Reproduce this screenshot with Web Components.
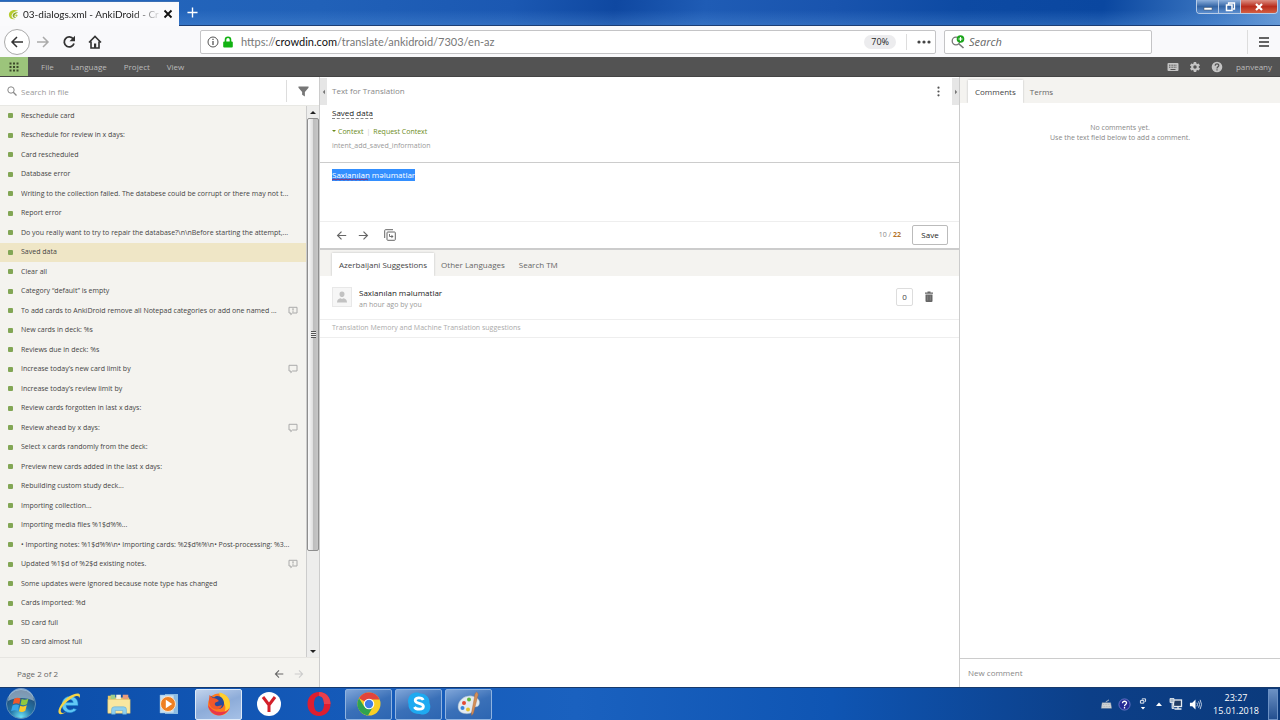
<!DOCTYPE html>
<html lang="en">
<head>
<meta charset="utf-8">
<title>03-dialogs.xml - AnkiDroid - Crowdin</title>
<style>
    html, body {
        height: 100%;
        margin: 0;
    }

    body {
        display: flex;
        flex-direction: column;
        overflow: hidden;
        font-family: "Open Sans", "Noto Sans", sans-serif;
        font-size: 8px;
        line-height: 10px;
        color: #444;
        background: #fff;
    }

    main {
        flex: 1;
        min-height: 0;
        display: grid;
        grid-template-columns: minmax(0, 1fr) minmax(0, 2fr) minmax(0, 1fr);
    }
</style>
</head>
<body>
    <title-bar></title-bar>
    <nav-bar></nav-bar>
    <menu-bar></menu-bar>
    <main>
        <file-panel></file-panel>
        <editor-panel></editor-panel>
        <comments-panel></comments-panel>
    </main>
    <task-bar></task-bar>

<script>
const ICONS = {
    crowdin: ['0 0 12 12', '<path d="M11 2C6.500-.2 1 2 1 6.500 1 10 4.500 12 8 11 5 10.500 3.500 8.500 4 6.500 4.800 3.500 8 2.500 11 2z" fill="#b6cc2e"/><path d="M11 3.500C7.500 3 4.800 4.800 5 7.300 5.300 9.500 7.500 10.200 9 9.500 7 9 6.500 7.500 7.500 6.200 8.200 5.200 9.700 4.500 11 3.500z" fill="#8fa82c"/><circle cx="9.200" cy="7.200" r="1.200" fill="#b6cc2e"/>'],
    close: ['0 0 10 10', '<path d="M1.500 1.500l7 7M8.500 1.500l-7 7" stroke="#111" stroke-width="1.800"/>'],
    plus: ['0 0 12 12', '<path d="M6 .5v11M.5 6h11" stroke="#fff" stroke-width="1.500"/>'],
    back: ['0 0 14 14', '<path d="M13 7H2M7 2L2 7l5 5" fill="none" stroke="currentColor" stroke-width="1.500"/>'],
    forward: ['0 0 14 14', '<path d="M1 7h11M7 2l5 5-5 5" fill="none" stroke="currentColor" stroke-width="1.500"/>'],
    reload: ['0 0 14 14', '<path d="M11.300 4A5 5 0 1 0 12 8.500" fill="none" stroke="currentColor" stroke-width="1.800"/><path d="M13 .8v5.500H7.500z" fill="currentColor"/>'],
    home: ['0 0 14 14', '<path d="M1 7.500L7 1.500l6 6M3 6.500V13h8V6.500" fill="none" stroke="currentColor" stroke-width="1.600"/><path d="M6 8.500h2.200V13H6z" fill="currentColor"/>'],
    info: ['0 0 12 12', '<circle cx="6" cy="6" r="5" fill="none" stroke="#555"/><path d="M6 5v4M6 2.800v1.300" stroke="#555" stroke-width="1.300"/>'],
    lock: ['0 0 12 12', '<path d="M3.500 6V3.800a2.500 2.500 0 0 1 5 0V6" fill="none" stroke="#12b212" stroke-width="1.600"/><rect x="1.200" y="5.500" width="9.600" height="6" rx="1" fill="#12b212"/>'],
    dots: ['0 0 14 4', '<g fill="#444"><circle cx="2" cy="2" r="1.600"/><circle cx="7" cy="2" r="1.600"/><circle cx="12" cy="2" r="1.600"/></g>'],
    engine: ['0 0 14 14', '<circle cx="5" cy="6" r="3.800" fill="none" stroke="#777" stroke-width="1.300"/><path d="M8 9l4.500 4" stroke="#777" stroke-width="1.600"/><circle cx="9.500" cy="4" r="3.800" fill="#1ba51b"/><path d="M9.500 2v4M7.500 4h4" stroke="#fff" stroke-width="1.200"/>'],
    burger: ['0 0 12 12', '<path d="M1 2h10M1 6h10M1 10h10" stroke="#333" stroke-width="1.500"/>'],
    grid: ['0 0 10 10', '<path d="M.5.500h2v2h-2zM4 .5h2v2H4zM7.500.500h2v2h-2zM.5 4h2v2h-2zM4 4h2v2H4zM7.500 4h2v2h-2zM.5 7.500h2v2h-2zM4 7.500h2v2H4zM7.500 7.500h2v2h-2z" fill="#3c4a2a"/>'],
    keyboard: ['0 0 12 12', '<rect x=".5" y="2" width="11" height="8" rx="1" fill="#c4c4c4"/><path d="M2 4.200h8M2 6.200h8" stroke="#555" stroke-dasharray="1 .6"/><path d="M3.500 8.500h5" stroke="#555"/>'],
    gear: ['0 0 24 24', '<path fill="#c4c4c4" d="M19.400 13a7.500 7.500 0 0 0 0-2l2.100-1.600a.5.500 0 0 0 .1-.7l-2-3.400a.5.500 0 0 0-.6-.2l-2.500 1a7.300 7.300 0 0 0-1.700-1l-.4-2.600a.5.500 0 0 0-.5-.5h-4a.5.500 0 0 0-.5.500L9 5.100a7.700 7.700 0 0 0-1.700 1l-2.500-1a.5.500 0 0 0-.6.200l-2 3.400a.5.500 0 0 0 .1.700L4.500 11a7.500 7.500 0 0 0 0 2l-2.100 1.600a.5.500 0 0 0-.1.700l2 3.400c.1.200.4.300.6.200l2.500-1a7.300 7.300 0 0 0 1.700 1l.4 2.600c0 .3.200.5.500.5h4c.3 0 .5-.2.500-.5l.4-2.600a7.700 7.700 0 0 0 1.700-1l2.500 1c.2.100.5 0 .6-.2l2-3.400a.5.500 0 0 0-.1-.7zM12 15.500a3.500 3.500 0 1 1 0-7 3.500 3.500 0 0 1 0 7z"/>'],
    help: ['0 0 12 12', '<circle cx="6" cy="6" r="5.300" fill="#c4c4c4"/><path d="M4.200 4.800C4.200 2 7.900 2.300 7.800 4.600 7.700 5.800 6 5.800 6 7.500" fill="none" stroke="#555" stroke-width="1.200"/><path d="M5.400 8.300h1.200v1.200H5.400z" fill="#555"/>'],
    search: ['0 0 10 10', '<circle cx="4" cy="4" r="3.200" fill="none" stroke="#888"/><path d="M6.300 6.300L9.500 9.500" stroke="#888" stroke-width="1.300"/>'],
    filter: ['0 0 12 12', '<path d="M.5.500h11v1.500L7.500 6.500v5L4.500 9.500v-3L.5 2z" fill="#777"/>'],
    comment: ['0 0 10 9', '<path d="M1 .8h8v5.700H4.500L2.800 8.200V6.500H1z" fill="none" stroke="#aaa"/>'],
    alert: ['0 0 10 9', '<path d="M1 .8h8v5.700H4.500L2.800 8.200V6.500H1z" fill="none" stroke="#aaa"/><path d="M5 1.800v2.200M5 4.800v1" stroke="#999"/>'],
    more: ['0 0 4 10', '<g fill="#555"><circle cx="2" cy="1.500" r="1"/><circle cx="2" cy="5" r="1"/><circle cx="2" cy="8.500" r="1"/></g>'],
    left: ['0 0 6 6', '<path d="M4 .8v4.400L1.800 3z" fill="#777"/>'],
    right: ['0 0 6 6', '<path d="M2 .8v4.400L4.200 3z" fill="#777"/>'],
    copy: ['0 0 12 12', '<path d="M9 .7H1.500a.8.800 0 0 0-.8.800V9M3.800 3h6.700a.8.800 0 0 1 .8.800v6.700a.8.800 0 0 1-.8.800H3.800a.8.800 0 0 1-.8-.8V3.800a.8.800 0 0 1 .8-.8z" fill="none" stroke="#666"/><path d="M5.500 5v2.500h2.800" fill="none" stroke="#666" stroke-width=".9"/><path d="M7.500 5.800l2 1.700-2 1.700z" fill="#666"/>'],
    trash: ['0 0 10 12', '<path d="M1 2.200h8M3.500 1.200h3" stroke="#666" stroke-width="1.200"/><path d="M1.500 3.500h7V10a1 1 0 0 1-1 1h-5a1 1 0 0 1-1-1z" fill="#666"/><path d="M3.700 4.500v5M6.300 4.500v5" stroke="#999" stroke-width=".6"/>'],
    user: ['0 0 18 18', '<path d="M9 3.500a2.600 2.600 0 0 1 2.500 2.700C11.500 7.800 10.400 9.100 9 9.100S6.500 7.800 6.500 6.200A2.600 2.600 0 0 1 9 3.500zM4 14.500c0-2.800 1.500-4 3.500-4.300L9 11l1.500-.8C12.500 10.500 14 11.700 14 14.500z" fill="#c2c2c2"/>'],
    minimize: ['0 0 12 12', '<rect x="2" y="6.500" width="8" height="2.500" fill="#fff" stroke="#456" stroke-width=".5"/>'],
    restore: ['0 0 12 12', '<path d="M4.500 4V2h6v6H9" fill="none" stroke="#fff" stroke-width="1.300"/><rect x="2.500" y="4" width="5.500" height="5.500" fill="none" stroke="#fff" stroke-width="1.500"/>'],
    quit: ['0 0 12 12', '<path d="M3 3l6 6M9 3L3 9" stroke="#fff" stroke-width="2.200"/>'],
    start: ['0 0 32 32', '<defs><radialGradient id="o" cx=".5" cy=".95" r=".95"><stop offset="0" stop-color="#6fe3f5"/><stop offset=".4" stop-color="#2375a8"/><stop offset="1" stop-color="#243f66"/></radialGradient></defs><circle cx="16" cy="16" r="14.500" fill="url(#o)" stroke="#5d8fb8"/><path d="M3 13a13 13 0 0 1 26 0c-7-4-19-4-26 0z" fill="#c9dbe8" opacity=".55"/><path d="M9 11c2.500-1.500 4.500-1.500 6.500-.5L14.300 16c-2-1-4-1-6.500.3z" fill="#f0582b"/><path d="M16.700 11c2.300 1 4.500.8 6.800-.6L22 16c-2.300 1.500-4.500 1.500-6.500.4z" fill="#8fc93f"/><path d="M7.500 17.500c2.500-1.300 4.500-1.200 6.500-.2L12.800 23c-2-1-4-1-6.700.2z" fill="#38a7ea"/><path d="M15.200 17.700c2.200 1 4.300 1 6.600-.4l-1.500 5.500c-2.300 1.500-4.300 1.500-6.400.5z" fill="#fbc92a"/>'],
    explorer: ['0 0 26 26', '<path d="M20.500 18.500C16 24 6.500 22 6 14.500 5.500 7 12 4.500 16 5.500c4.500 1 6.300 4.500 6 9H10c.5 5 5.500 5.500 7.500 3zM10.200 11.500h7c-.5-4-6-4-7 0z" fill="#62c8f5" stroke="#1b86cc" stroke-width=".5"/><path d="M3 22.500C.5 19 7 9 14 5c5-3 10-3.500 10-.5 0 1-.4 2-.8 2.700.3-2.500-2.700-3-7.200-.2C9 11 3.500 18 5 21c.7 1.400 3 1 5 0-2.500 2-5.800 3-7 1.500z" fill="#f5d547"/>'],
    folder: ['0 0 28 26', '<path d="M2 4h7l1 2h15v16H2z" fill="#e8c766"/><path d="M5 3h5v5H5z" fill="#9fcf8c"/><path d="M11 3h5v5h-5z" fill="#f8f3e2"/><path d="M18 3h6v5h-6z" fill="#e99c7c"/><path d="M2 8h24v15H2z" fill="#f9e7a0" stroke="#d7b65a" stroke-width=".5"/><path d="M6 24v-5q0-3 3-3h10q3 0 3 3v5h-4v-4h-8v4z" fill="#8fd0ee" stroke="#62a8d2" stroke-width=".6"/>'],
    media: ['0 0 26 26', '<path d="M9 3h13v20H9z" fill="#8dbde3"/><path d="M4 4h14v18H4z" fill="#c4e0f4" stroke="#86b3d8" stroke-width=".5"/><circle cx="12" cy="13" r="7.500" fill="#ef8022" stroke="#fbe3c8"/><path d="M9.800 8.800l6.400 4.200-6.400 4.200z" fill="#fff"/>'],
    firefox: ['0 0 26 26', '<circle cx="13" cy="13.500" r="11" fill="#ff7a1f"/><path d="M13 1.500c7 1 11.500 6 11 12.500 0 5-3 9-8 10.500 4-4 4.500-9 1.500-13-2-3-4-6-4.500-10z" fill="#ffce2e"/><path d="M4 8l1-3 3 1.500c4-3.500 9.500 0 10 5 .5 5-4 7.500-7.500 6C6 17 6 12 8 11l4-1-3-2z" fill="#2a4a9c"/><path d="M3 9l.5-5 3.500 3c2 0 4.500 1 6 3l-3.500 1.500C8 13 9 15 11 15.200c2.500 0 3-1.200 5-1-1 4-5.500 5-8 3.800C4 16.500 2.500 12 3 9z" fill="#f0582b"/><path d="M2 14c1 7 7 10.500 12 10.300 5-.3 8.500-3.800 9.500-7.300-2.500 3-5 4-9 4-6 0-9.500-3-12.500-7z" fill="#e8374a"/>'],
    yandex: ['0 0 26 26', '<circle cx="13" cy="13" r="12" fill="#fff"/><path d="M7 6l6 8 6-8M13 13v8" fill="none" stroke="#d3202a" stroke-width="3"/>'],
    opera: ['0 0 26 26', '<path fill-rule="evenodd" d="M13 1c7 0 11.500 5.200 11.500 12S20 25 13 25 1.500 19.800 1.500 13 6 1 13 1zm0 4c-3.300 0-5 3.600-5 8s1.700 8 5 8 5-3.600 5-8-1.700-8-5-8z" fill="#de1e30"/><path d="M13 1c7 0 11.500 5.200 11.500 12H18c0-4.400-1.700-8-5-8z" fill="#e8404d"/>'],
    chrome: ['0 0 26 26', '<circle cx="13" cy="13" r="11.500" fill="#f9cf26"/><path d="M13 13L3 7.200A11.500 11.500 0 0 1 23.500 8.500H13z" fill="#e2453c"/><path d="M3 7.200A11.500 11.500 0 0 0 12 24.500l5-8.800L13 13 8.200 15.500z" fill="#2fa34f"/><circle cx="13" cy="13" r="5.300" fill="#fff"/><circle cx="13" cy="13" r="4.200" fill="#3f7de8"/>'],
    skype: ['0 0 26 26', '<path d="M8 2c3-1 5 0 6.500.500C20 2.500 24 7 23.500 12c2 4 .5 11-6 11.500-2 .3-3-.5-4.500-.5-6 0-11-4-10.500-10C1 8 3.500 3 8 2z" fill="#1eaaf1"/><path d="M17.200 9c-1-2.500-8-3-8 .2 0 4 8.200 2.200 8.200 6.300 0 3.500-7.500 3.300-9 .5" fill="none" stroke="#fff" stroke-width="2.800"/>'],
    paint: ['0 0 26 26', '<path d="M2 16C2 9 9 4 16 5c6 1 9 5 7 9-1.500 3-5 1-6 3-1 3 0 5-4 5.500C7 23.500 2 21 2 16z" fill="#e2ebf2" stroke="#90a9bd" stroke-width=".5"/><circle cx="8" cy="12" r="2" fill="#e34b33"/><circle cx="13" cy="8.500" r="2" fill="#62b83b"/><circle cx="6.500" cy="17" r="2" fill="#3b86d9"/><circle cx="12" cy="18.500" r="2" fill="#e6c22d"/><path d="M20.500 1c2 1 2 3 1 5l-4 16-1.800 2.500L15.500 22l3-16c0-2 .5-4 2-5z" fill="#d38f58" stroke="#a7633a" stroke-width=".4"/>'],
    traykeys: ['0 0 14 12', '<path d="M2.500 4.500h10L13.500 11h-12z" fill="#d3d6d8" stroke="#8b98a5" stroke-width=".5"/><path d="M3.500 6.500h8.500M3 8.800h9" stroke="#9aa3aa" stroke-width=".7" stroke-dasharray="1.200 .7"/><path d="M7 4c0-2 2-.8 3.500-3" fill="none" stroke="#c5cbd0"/>'],
    trayhelp: ['0 0 14 14', '<circle cx="7" cy="7" r="6" fill="#252a96" stroke="#8088d8" stroke-width=".8"/><path d="M4.800 5.600c0-3 4.600-2.600 4.400-.2C9.100 7 7 7 7 8.800M7 9.800v1.500" fill="none" stroke="#fff" stroke-width="1.400"/>'],
    trayrestore: ['0 0 8 14', '<path d="M3 2V1h4v3H6M1 3h4v3H1z" fill="none" stroke="#fff"/><path d="M1.500 10.500h5l-2.500 3z" fill="#fff"/>'],
    trayup: ['0 0 8 8', '<path d="M1 6h6L4 2.500z" fill="#fff"/>'],
    network: ['0 0 14 14', '<rect x="4.500" y="3" width="8" height="6.500" fill="#233e66" stroke="#e8edf2" stroke-width="1.300"/><path d="M5.500 12h7M9 9.500V12" stroke="#e8edf2" stroke-width="1.300"/><path d="M1 1.500h4v4H1zM3 5v6.500h2.500" fill="#a8b8c8" stroke="#e8edf2" stroke-width=".8"/>'],
    sound: ['0 0 14 14', '<path d="M1 5h2.500L7 1.500v11L3.500 9H1z" fill="#fff"/><path d="M8.500 5q1.200 2 0 4M10.300 3.500q2.200 3.500 0 7M12 2q3 5 0 10" fill="none" stroke="#dfe8f5" stroke-width=".9"/>']
};

const FILE_STRINGS = [
    ['Reschedule card'],
    ['Reschedule for review in x days:'],
    ['Card rescheduled'],
    ['Database error'],
    ['Writing to the collection failed. The databese could be corrupt or there may not t...'],
    ['Report error'],
    ['Do you really want to try to repair the database?\\n\\nBefore starting the attempt,...'],
    ['Saved data', '', true],
    ['Clear all'],
    ['Category “default” is empty'],
    ['To add cards to AnkiDroid remove all Notepad categories or add one named ...', 'alert'],
    ['New cards in deck: %s'],
    ['Reviews due in deck: %s'],
    ['Increase today’s new card limit by', 'comment'],
    ['Increase today’s review limit by'],
    ['Review cards forgotten in last x days:'],
    ['Review ahead by x days:', 'comment'],
    ['Select x cards randomly from the deck:'],
    ['Preview new cards added in the last x days:'],
    ['Rebuilding custom study deck...'],
    ['Importing collection...'],
    ['Importing media files %1$d%%...'],
    ['• Importing notes: %1$d%%\\n• Importing cards: %2$d%%\\n• Post-processing: %3...'],
    ['Updated %1$d of %2$d existing notes.', 'alert'],
    ['Some updates were ignored because note type has changed'],
    ['Cards imported: %d'],
    ['SD card full'],
    ['SD card almost full']
];

const BASE_STYLE = `
    :host, * { box-sizing: border-box; }
    button, input, textarea {
        margin: 0;
        padding: 0;
        border: 0;
        background: none;
        font: inherit;
        color: inherit;
        outline: none;
    }
    button { display: flex; align-items: center; justify-content: center; }
    a { color: inherit; text-decoration: none; }
`;

class BaseElement extends HTMLElement {
    constructor() {
        super();
        this.attachShadow({ mode: 'open' });
    }

    connectedCallback() {
        this.shadowRoot.innerHTML = `<style>${BASE_STYLE}${this.styles()}</style>${this.render()}`;
        this.ready();
    }

    styles() { return ''; }
    render() { return ''; }
    ready() {}
}

// <ui-icon name="gear" size="12">
class UiIcon extends BaseElement {
    styles() {
        const size = this.getAttribute('size') || '12';
        return `
            :host { display: inline-flex; flex: none; width: ${size}px; height: ${size}px; }
            svg { width: 100%; height: 100%; }
        `;
    }

    render() {
        const [viewBox, body] = ICONS[this.getAttribute('name')];
        return `<svg viewBox="${viewBox}" aria-hidden="true">${body}</svg>`;
    }
}

class TitleBar extends BaseElement {
    styles() {
        return `
            :host {
                display: flex;
                height: 26px;
                flex: none;
                padding-right: 2px;
                border-bottom: 1px solid #1b3d74;
                background:
                    linear-gradient(180deg, transparent 40%, rgba(90, 150, 220, .35)),
                    linear-gradient(100deg, #2467bd 0, #2161b8 25%, #1b58b2 40%, #0f48a1 48%, #1f5cb5 55%, #1954ae 65%, #0d4aa3 75%, #0a47a0 86%, #3c77c2 95%, #6b9bd4);
            }
            .tab {
                display: flex;
                align-items: center;
                width: 179px;
                height: 25px;
                margin-top: 1px;
                padding: 0 8px;
                gap: 4px;
                background: #fafafc;
                border-top: 1px solid #3a6fb5;
                color: #222;
                font-family: Lato, "Open Sans", sans-serif;
                font-size: 10px;
                line-height: 14px;
            }
            .title {
                flex: 1;
                white-space: nowrap;
                -webkit-mask-image: linear-gradient(90deg, #000 110px, transparent 140px);
            }
            .add { width: 26px; }
            .controls { display: flex; margin-left: auto; height: 14px; border: 1px solid #b8cce6; border-top: 0; border-radius: 0 0 4px 4px; overflow: hidden; }
            .controls button { width: 22px; background: linear-gradient(#8db0dd, #3465a5 50%, #5c8fd0); border-right: 1px solid #b8cce6; }
            .controls .quit { width: 36px; border: 0; background: linear-gradient(#dc8f83, #b92d1d 50%, #d45e41); }
        `;
    }

    render() {
        return `
            <div class="tab">
                <ui-icon name="crowdin" size="11"></ui-icon>
                <span class="title">03-dialogs.xml - AnkiDroid - Cr</span>
                <button aria-label="Close tab"><ui-icon name="close" size="10"></ui-icon></button>
            </div>
            <button class="add" aria-label="New tab"><ui-icon name="plus" size="11"></ui-icon></button>
            <div class="controls">
                <button aria-label="Minimize"><ui-icon name="minimize" size="12"></ui-icon></button>
                <button aria-label="Restore"><ui-icon name="restore" size="12"></ui-icon></button>
                <button class="quit" aria-label="Close"><ui-icon name="quit" size="12"></ui-icon></button>
            </div>
        `;
    }
}

class NavBar extends BaseElement {
    styles() {
        return `
            :host {
                display: flex;
                align-items: center;
                flex: none;
                height: 31px;
                padding: 0 10px 0 4px;
                background: #f9f9fb;
                color: #333;
                font-size: 11px;
                line-height: 14px;
            }
            .tools { display: flex; width: 196px; align-items: center; }
            .tools button { width: 26px; height: 26px; }
            .tools .back { border: 1px solid #aaa; border-radius: 50%; background: #fff; }
            .tools .off { color: #aaa; }
            .field { display: flex; align-items: center; height: 24px; border: 1px solid #c4c4c6; border-radius: 2px; background: #fff; }
            .url { flex: 1; padding: 0 4px 0 6px; gap: 3px; }
            .address { flex: 1; padding-left: 4px; color: #777; font-family: Lato, "Open Sans", sans-serif; }
            .address b { font-weight: 400; color: #111; }
            .zoom { height: 14px; padding: 0 7px; border-radius: 7px; background: #ececee; font-size: 9px; color: #222; }
            .page { height: 16px; padding-left: 10px; margin-left: 7px; border-left: 1px solid #ddd; }
            .search { width: 208px; margin-left: 8px; padding: 0 6px; gap: 4px; }
            .search input { flex: 1; min-width: 0; font-style: italic; }
            .search input::placeholder { color: #666; }
            .menu { height: 24px; margin-left: 95px; padding-left: 10px; border-left: 1px solid #ddd; }
        `;
    }

    render() {
        return `
            <div class="tools">
                <button class="back" aria-label="Back"><ui-icon name="back" size="14"></ui-icon></button>
                <button class="off" aria-label="Forward"><ui-icon name="forward" size="14"></ui-icon></button>
                <button aria-label="Reload"><ui-icon name="reload" size="14"></ui-icon></button>
                <button aria-label="Home"><ui-icon name="home" size="14"></ui-icon></button>
            </div>
            <div class="field url">
                <ui-icon name="info" size="12"></ui-icon>
                <ui-icon name="lock" size="12"></ui-icon>
                <a class="address" href="#">https://<b>crowdin.com</b>/translate/ankidroid/7303/en-az</a>
                <button class="zoom">70%</button>
                <button class="page" aria-label="Page actions"><ui-icon name="dots" size="14"></ui-icon></button>
            </div>
            <label class="field search">
                <ui-icon name="engine" size="14"></ui-icon>
                <input type="text" placeholder="Search" aria-label="Search">
            </label>
            <button class="menu" aria-label="Menu"><ui-icon name="burger" size="12"></ui-icon></button>
        `;
    }
}

class MenuBar extends BaseElement {
    styles() {
        return `
            :host {
                display: flex;
                align-items: center;
                flex: none;
                height: 20px;
                padding-right: 8px;
                background: #535353;
                border-bottom: 1px solid #444;
                color: #bbb;
            }
            .apps { width: 28px; height: 19px; margin-right: 13px; background: #9cc47b; }
            nav { display: flex; gap: 17px; flex: 1; }
            .right { display: flex; align-items: center; gap: 10px; }
            .right a { margin-left: 3px; }
        `;
    }

    render() {
        return `
            <button class="apps" aria-label="Apps"><ui-icon name="grid" size="10"></ui-icon></button>
            <nav>
                <a href="#">File</a>
                <a href="#">Language</a>
                <a href="#">Project</a>
                <a href="#">View</a>
            </nav>
            <div class="right">
                <ui-icon name="keyboard" size="12"></ui-icon>
                <ui-icon name="gear" size="12"></ui-icon>
                <ui-icon name="help" size="12"></ui-icon>
                <a href="#">panveany</a>
            </div>
        `;
    }
}

class StringRow extends BaseElement {
    styles() {
        return `
            :host {
                display: flex;
                align-items: center;
                flex: 1;
                min-height: 0;
                padding: 0 8px;
                font-size: 7px;
            }
            :host([selected]) { background: #efe6c6; }
            i { flex: none; width: 5px; height: 5px; margin-right: 8px; border-radius: 1px; background: #82a655; }
            span { flex: 1; overflow: hidden; white-space: nowrap; }
        `;
    }

    render() {
        const flag = this.getAttribute('flag');
        return `
            <i></i>
            <span><slot></slot></span>
            ${flag ? `<ui-icon name="${flag}" size="10"></ui-icon>` : ''}
        `;
    }
}

class ScrollTrack extends BaseElement {
    styles() {
        return `
            :host { display: flex; flex-direction: column; width: 13px; background: #ededec; border-left: 1px solid #ccc; }
            button { height: 12px; }
            button::before { content: ""; border: 3px solid transparent; border-top: 0; border-bottom: 3px solid #222; }
            button.down::before { border-bottom: 0; border-top: 3px solid #222; }
            .thumb {
                flex: 433;
                display: flex;
                align-items: center;
                justify-content: center;
                border: 1px solid #8e8e8e;
                border-radius: 2px;
                background: linear-gradient(90deg, #fafafa, #e0e0e0 45%, #bdbdbd 55%, #c6c6c6);
            }
            .thumb::before { content: ""; width: 5px; height: 7px; background: repeating-linear-gradient(#555 0 1px, #eee 1px 2px); }
            .rest { flex: 94; }
        `;
    }

    render() {
        return `
            <button aria-label="Scroll up"></button>
            <div class="thumb"></div>
            <div class="rest"></div>
            <button class="down" aria-label="Scroll down"></button>
        `;
    }
}

class FilePanel extends BaseElement {
    styles() {
        return `
            :host { display: flex; flex-direction: column; min-height: 0; background: #f4f3ef; border-right: 1px solid #ccc; }
            .find { display: flex; align-items: center; flex: none; height: 29px; padding-left: 7px; gap: 4px; background: #fff; border-bottom: 1px solid #e8e8e4; }
            .find label { display: flex; flex: 1; align-items: center; gap: 4px; }
            .find input { flex: 1; min-width: 0; height: 14px; }
            .find input::placeholder { color: #999; }
            .find button { width: 33px; height: 22px; border-left: 1px solid #ddd; }
            .body { display: flex; flex: 1; min-height: 0; }
            .list { display: flex; flex-direction: column; flex: 1; min-width: 0; padding-bottom: 5px; }
            footer { display: flex; align-items: center; flex: none; height: 30px; padding: 2px 15px 0 17px; gap: 10px; border-top: 1px solid #e6e5e1; color: #666; }
            footer span { flex: 1; }
            footer .off { color: #ccc; }
        `;
    }

    render() {
        return `
            <div class="find">
                <label><ui-icon name="search" size="10"></ui-icon><input type="text" placeholder="Search in file" aria-label="Search in file"></label>
                <button aria-label="Filter"><ui-icon name="filter" size="11"></ui-icon></button>
            </div>
            <div class="body">
                <div class="list">
                    ${FILE_STRINGS.map(([text, flag, selected]) => `
                        <string-row ${flag ? `flag="${flag}"` : ''} ${selected ? 'selected' : ''}>${text}</string-row>
                    `).join('')}
                </div>
                <scroll-track></scroll-track>
            </div>
            <footer>
                <span>Page 2 of 2</span>
                <button aria-label="Previous page"><ui-icon name="back" size="10"></ui-icon></button>
                <button class="off" aria-label="Next page"><ui-icon name="forward" size="10"></ui-icon></button>
            </footer>
        `;
    }
}

// Tab strip; the first tab is the open one
class TabStrip extends BaseElement {
    styles() {
        return `
            :host { display: flex; align-items: flex-end; flex: none; height: 26px; padding-left: var(--tabs-start, 12px); background: #f4f3f0; }
            button { height: 23px; padding: 0 7px; color: #666; }
            button:first-of-type { background: #fff; color: #444; box-shadow: 0 0 2px #bbb; clip-path: inset(-2px -2px 0 -2px); }
        `;
    }

    render() {
        return this.getAttribute('tabs').split('|').map(tab => `<button>${tab}</button>`).join('');
    }
}

class SuggestionItem extends BaseElement {
    styles() {
        return `
            :host { display: flex; align-items: center; flex: none; height: 44px; padding: 0 24px 2px 12px; border-bottom: 1px solid #eee; }
            .avatar { width: 20px; height: 20px; border: 1px solid #e8e8e8; background: #f6f6f6; }
            .text { flex: 1; padding: 5px 0 0 7px; color: #222; }
            .text small { display: block; margin-top: 2px; font-size: 7px; color: #999; }
            .votes { width: 17px; height: 18px; margin-right: 10px; border: 1px solid #ddd; border-radius: 2px; color: #444; }
        `;
    }

    render() {
        return `
            <ui-icon class="avatar" name="user" size="20"></ui-icon>
            <div class="text"><slot></slot><small>${this.getAttribute('meta')}</small></div>
            <button class="votes">${this.getAttribute('votes')}</button>
            <button aria-label="Delete"><ui-icon name="trash" size="12"></ui-icon></button>
        `;
    }
}

class EditorPanel extends BaseElement {
    styles() {
        return `
            :host { position: relative; display: flex; flex-direction: column; min-width: 0; border-right: 1px solid #ccc; background: #fff; }
            .handle { position: absolute; top: 1px; width: 7px; height: 27px; background: #e6e6e6; }
            .handle.left { left: 0; }
            .handle.right { right: 0; }
            .source { display: flex; flex-direction: column; align-items: flex-start; flex: none; height: 86px; padding: 9px 15px 0 12px; border-bottom: 1px solid #ccc; }
            .source header { display: flex; justify-content: space-between; align-self: stretch; height: 22px; color: #888; }
            .word { color: #222; border-bottom: 1px dashed #888; }
            .links { display: flex; gap: 3px; margin-top: 8px; font-size: 7px; color: #6c8c1c; }
            .links i { color: #ccc; font-style: normal; }
            .links .context::before { content: ""; display: inline-block; margin: 0 2px 2px 0; border: 2px solid transparent; border-top: 2px solid #6c8c1c; border-bottom: 0; }
            .key { margin-top: 4px; font-size: 7px; color: #999; }
            .target { position: relative; display: flex; flex: none; height: 59px; padding: 6px 12px; border-bottom: 1px solid #eee; }
            textarea { flex: 1; resize: none; line-height: 12px; overflow: hidden; }
            textarea::selection { background: #338fff; color: #fff; }
            .wave { position: absolute; left: 12px; top: 15px; width: 36px; height: 3px; }
            .bar { display: flex; align-items: center; flex: none; height: 28px; padding: 0 11px 0 16px; gap: 11px; border-bottom: 2px solid #ccc; color: #666; }
            .bar .copy { margin-left: 4px; }
            .count { margin-left: auto; font-size: 7px; color: #888; }
            .count b { color: #b5762c; }
            .save { width: 36px; height: 20px; border: 1px solid #bbb; border-radius: 2px; color: #222; }
            .memory { flex: none; padding: 3px 12px 4px; border-bottom: 1px solid #eee; font-size: 7px; color: #aaa; }
        `;
    }

    render() {
        return `
            <section class="source">
                <header><span>Text for Translation</span><ui-icon name="more" size="11"></ui-icon></header>
                <span class="word">Saved data</span>
                <div class="links"><a class="context" href="#">Context</a><i>|</i><a href="#">Request Context</a></div>
                <span class="key">intent_add_saved_information</span>
            </section>
            <section class="target">
                <textarea aria-label="Translation" spellcheck="false">Saxlanılan məlumatlar</textarea>
                <svg class="wave" viewBox="0 0 36 3" aria-hidden="true"><path d="M0 2l2-1 2 1 2-1 2 1 2-1 2 1 2-1 2 1 2-1 2 1 2-1 2 1 2-1 2 1 2-1 2 1 2-1 2 1" fill="none" stroke="#8c2a6a"/></svg>
            </section>
            <section class="bar">
                <button aria-label="Previous string"><ui-icon name="back" size="11"></ui-icon></button>
                <button aria-label="Next string"><ui-icon name="forward" size="11"></ui-icon></button>
                <button class="copy" aria-label="Copy source"><ui-icon name="copy" size="12"></ui-icon></button>
                <span class="count">10 / <b>22</b></span>
                <button class="save">Save</button>
            </section>
            <tab-strip tabs="Azerbaijani Suggestions|Other Languages|Search TM"></tab-strip>
            <suggestion-item meta="an hour ago by you" votes="0">Saxlanılan məlumatlar</suggestion-item>
            <div class="memory">Translation Memory and Machine Translation suggestions</div>
            <button class="handle left" aria-label="Hide file list"><ui-icon name="left" size="6"></ui-icon></button>
            <button class="handle right" aria-label="Hide comments"><ui-icon name="right" size="6"></ui-icon></button>
        `;
    }

    ready() {
        const area = this.shadowRoot.querySelector('textarea');
        area.focus();
        area.select();
    }
}

class CommentsPanel extends BaseElement {
    styles() {
        return `
            :host { --tabs-start: 8px; display: flex; flex-direction: column; min-width: 0; background: #fff; }
            p { flex: 1; margin: 0; padding-top: 20px; text-align: center; font-size: 7px; color: #888; }
            label { display: flex; flex: none; height: 29px; padding: 0 8px; border-top: 1px solid #ccc; }
            input { flex: 1; min-width: 0; }
            input::placeholder { color: #888; }
        `;
    }

    render() {
        return `
            <tab-strip tabs="Comments|Terms"></tab-strip>
            <p>No comments yet.<br>Use the text field below to add a comment.</p>
            <label><input type="text" placeholder="New comment" aria-label="New comment"></label>
        `;
    }
}

class TaskBar extends BaseElement {
    styles() {
        return `
            :host {
                display: flex;
                align-items: center;
                flex: none;
                height: 33px;
                padding: 0 2px 0 5px;
                border-top: 1px solid #173a6c;
                background: linear-gradient(90deg, #0b4da8, #1459b8 25%, #1a61bf 45%, #0f55b3 65%, #0c3f88 85%, #0b3a7c);
                color: #fff;
                font-size: 9px;
                line-height: 13px;
            }
            .apps { display: flex; flex: 1; gap: 3px; margin-left: 8px; }
            .apps button { width: 47px; height: 31px; border: 1px solid transparent; border-radius: 2px; }
            .apps .open { border-color: #8fb3e0; background: linear-gradient(160deg, #7fa5d8, #3a70b8 50%, #2d66b2); }
            .apps .active { border-color: #dce9f8; background: linear-gradient(160deg, #c2d3ec, #8dacd9 50%, #a5c0e6); }
            .tray { display: flex; align-items: center; gap: 6px; }
            time { margin: 0 9px 0 11px; text-align: center; }
            .desktop { width: 10px; height: 31px; border: 1px solid #6c91c4; background: linear-gradient(#6c91c4, #234f8f); }
        `;
    }

    render() {
        const apps = [
            ['explorer', 'Internet Explorer', ''],
            ['folder', 'Windows Explorer', ''],
            ['media', 'Media Player', ''],
            ['firefox', 'Firefox', 'active'],
            ['yandex', 'Yandex', ''],
            ['opera', 'Opera', ''],
            ['chrome', 'Chrome', 'open'],
            ['skype', 'Skype', 'open'],
            ['paint', 'Paint', 'open']
        ];
        return `
            <button aria-label="Start"><ui-icon name="start" size="32"></ui-icon></button>
            <div class="apps">
                ${apps.map(([icon, label, state]) => `
                    <button class="${state}" aria-label="${label}"><ui-icon name="${icon}" size="26"></ui-icon></button>
                `).join('')}
            </div>
            <div class="tray">
                <ui-icon name="traykeys" size="12"></ui-icon>
                <ui-icon name="trayhelp" size="13"></ui-icon>
                <ui-icon name="trayrestore" size="12"></ui-icon>
                <ui-icon name="trayup" size="8"></ui-icon>
                <ui-icon name="network" size="14"></ui-icon>
                <ui-icon name="sound" size="13"></ui-icon>
            </div>
            <time>23:27<br>15.01.2018</time>
            <button class="desktop" aria-label="Show desktop"></button>
        `;
    }
}

customElements.define('ui-icon', UiIcon);
customElements.define('string-row', StringRow);
customElements.define('scroll-track', ScrollTrack);
customElements.define('tab-strip', TabStrip);
customElements.define('suggestion-item', SuggestionItem);
customElements.define('title-bar', TitleBar);
customElements.define('nav-bar', NavBar);
customElements.define('menu-bar', MenuBar);
customElements.define('file-panel', FilePanel);
customElements.define('editor-panel', EditorPanel);
customElements.define('comments-panel', CommentsPanel);
customElements.define('task-bar', TaskBar);
</script>
</body>
</html>
